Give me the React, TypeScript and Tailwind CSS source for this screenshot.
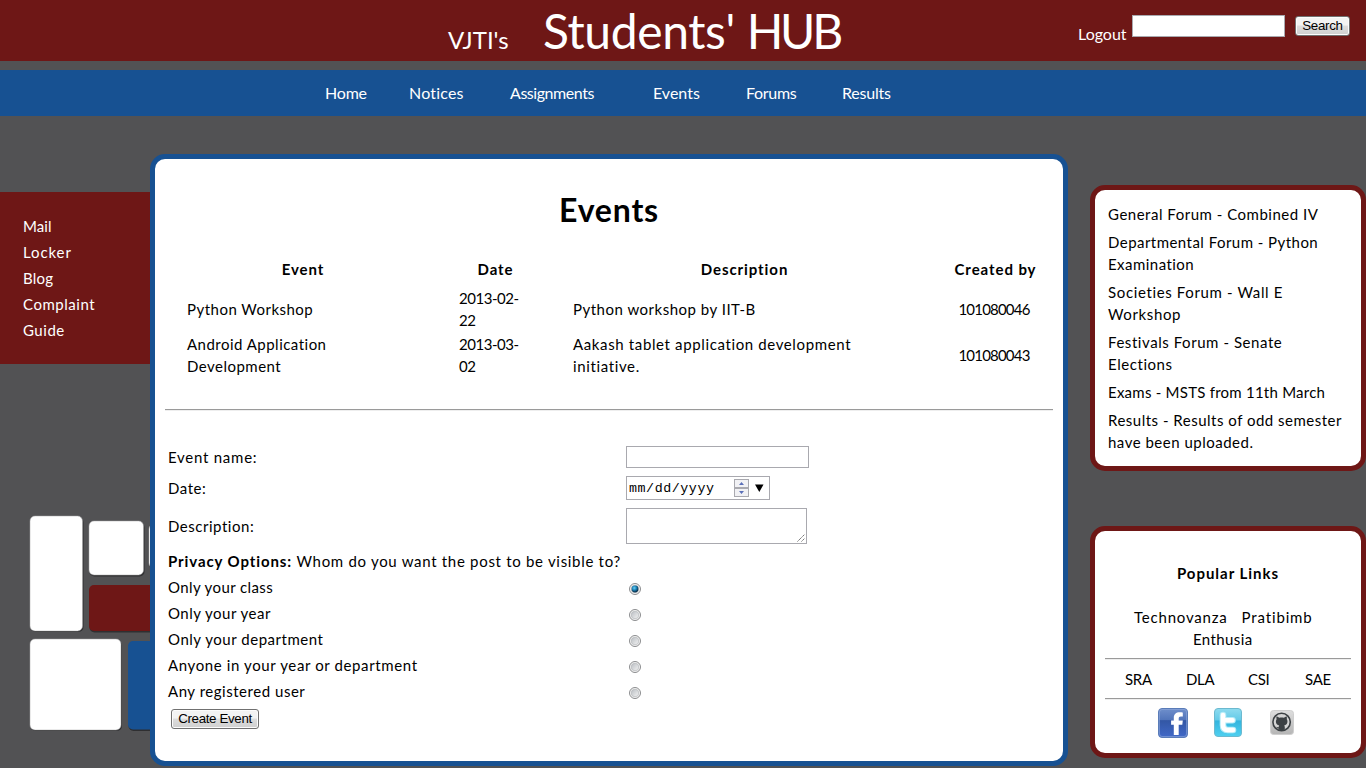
const events = [
  { name: ["Python Workshop"], date: ["2013-02-", "22"], description: ["Python workshop by IIT-B"], by: "101080046", spacing: "tracking-[0.5px]" },
  {
    name: ["Android Application", "Development"],
    date: ["2013-03-", "02"],
    description: ["Aakash tablet application development", "initiative."],
    by: "101080043",
    spacing: "tracking-[0.63px]",
  },
];

const forum = [
  { lines: ["General Forum - Combined IV"], spacing: "tracking-[0.51px]" },
  { lines: ["Departmental Forum - Python", "Examination"], spacing: "tracking-[0.46px]" },
  { lines: ["Societies Forum - Wall E", "Workshop"], spacing: "tracking-[0.64px]" },
  { lines: ["Festivals Forum - Senate", "Elections"], spacing: "tracking-[0.56px]" },
  { lines: ["Exams - MSTS from 11th March"], spacing: "tracking-[0.24px]" },
  { lines: ["Results - Results of odd semester", "have been uploaded."], spacing: "tracking-[0.5px]" },
];

const audiences = [
  { label: "Only your class", spacing: "tracking-[0.4px]" },
  { label: "Only your year", spacing: "tracking-[0.5px]" },
  { label: "Only your department", spacing: "tracking-[0.53px]" },
  { label: "Anyone in your year or department", spacing: "tracking-[0.62px]" },
  { label: "Any registered user", spacing: "tracking-[0.53px]" },
];

function Lines({ lines }: { lines: string[] }) {
  return (
    <>
      {lines.map((line) => (
        <span key={line} className="block whitespace-nowrap">{line}</span>
      ))}
    </>
  );
}

function Rule() {
  return <hr className="h-[2px] border-0 border-t border-[#9a9a9a] bg-[#eeeeee]" />;
}

function GreyButton({ children, className }: { children: string; className: string }) {
  return (
    <button
      className={`${className} h-5 shrink-0 rounded-[3px] border border-[#707070] bg-linear-to-b from-[#f3f3f3] from-45% via-[#dddddd] via-50% to-[#cfcfcf] text-center font-['Liberation_Sans',sans-serif] text-[13.33px] leading-[18px] whitespace-nowrap text-black shadow-[inset_0_0_0_1px_#fcfcfc]`}
    >
      {children}
    </button>
  );
}

function Radio({ checked }: { checked: boolean }) {
  return (
    <svg role="radio" aria-checked={checked} width="12" height="12" viewBox="0 0 12 12">
      <defs>
        <linearGradient id="dish" x1="0" y1="0" x2="1" y2="1">
          <stop offset="0" stopColor="#b9bdc2" />
          <stop offset="1" stopColor="#f4f4f4" />
        </linearGradient>
        <radialGradient id="dot" cx="0.4" cy="0.35" r="0.6">
          <stop offset="0" stopColor="#6fd0f5" />
          <stop offset="0.5" stopColor="#1c86bb" />
          <stop offset="1" stopColor="#0b3350" />
        </radialGradient>
      </defs>
      <circle cx="6" cy="6" r="5.5" fill="#f6f6f6" stroke="#8b8c8e" />
      <circle cx="6" cy="6" r="3.8" fill="url(#dish)" stroke="#b4b7ba" strokeWidth="0.7" />
      {checked && <circle cx="6" cy="6" r="3.4" fill="url(#dot)" />}
    </svg>
  );
}

function Tiles() {
  return (
    <svg width="150" height="220" viewBox="0 0 150 220" className="mt-[150px] block">
      <g fill="#2f2f31">
        <rect x="30.5" y="3.5" width="53" height="114.5" rx="5" />
        <rect x="89.5" y="8.5" width="55" height="54" rx="5" />
        <rect x="89.5" y="72.5" width="90" height="46" rx="5" />
        <rect x="30.5" y="126.5" width="91.5" height="90.5" rx="5" />
        <rect x="128.5" y="128.5" width="60" height="88.5" rx="5" />
      </g>
      <g fill="#ffffff" stroke="#a5a5a7" strokeWidth="0.5">
        <rect x="30" y="2" width="52.5" height="115" rx="5" />
        <rect x="89" y="7" width="54.5" height="54" rx="5" />
        <rect x="149" y="10" width="50" height="44" rx="5" />
        <rect x="30" y="125" width="91" height="91" rx="5" />
      </g>
      <rect x="89" y="71" width="90" height="46" rx="5" fill="#6e1716" />
      <rect x="128" y="127" width="60" height="88.5" rx="5" fill="#175192" />
    </svg>
  );
}

function Facebook() {
  return (
    <svg width="30" height="30" viewBox="0 0 30 30">
      <defs>
        <linearGradient id="fb" x1="0" y1="0" x2="0" y2="1">
          <stop offset="0" stopColor="#6f8fcb" />
          <stop offset="0.38" stopColor="#5275bb" />
          <stop offset="0.42" stopColor="#3357a5" />
          <stop offset="1" stopColor="#4169c8" />
        </linearGradient>
      </defs>
      <rect x="0.5" y="0.5" width="29" height="29" rx="3.5" fill="url(#fb)" stroke="#5a7cb8" />
      <rect x="1.5" y="1.5" width="27" height="27" rx="2.5" fill="none" stroke="#8da8dc" strokeOpacity="0.6" />
      <path d="M15.8 27V16.7h-2.7v-4.2h2.7V10c0-3.9 2.2-5.7 5.8-5.7 1.3 0 2.6.1 3.2.3v4h-1.9c-1.7 0-2.2.7-2.2 2v1.9h4.1l-.5 4.2h-3.6V27z" fill="#fff" />
    </svg>
  );
}

function Twitter() {
  return (
    <svg width="28" height="29" viewBox="0 0 28 29">
      <defs>
        <linearGradient id="tw" x1="0" y1="0" x2="0" y2="1">
          <stop offset="0" stopColor="#8edcf0" />
          <stop offset="0.4" stopColor="#65cbe8" />
          <stop offset="0.45" stopColor="#35b5de" />
          <stop offset="1" stopColor="#4fd0f0" />
        </linearGradient>
      </defs>
      <rect x="0.5" y="0.5" width="27" height="28" rx="3.5" fill="url(#tw)" stroke="#6cb9cf" />
      <g fill="none" strokeLinecap="round" strokeLinejoin="round">
        <path d="M9 7v10c0 3.400 1.600 5 4.800 5h5.200M9 12.200h9.500" stroke="#b5ecf8" strokeWidth="6.6" />
        <path d="M9 7v10c0 3.400 1.600 5 4.800 5h5.200M9 12.200h9.500" stroke="#fff" strokeWidth="4.6" />
      </g>
    </svg>
  );
}

function Github() {
  return (
    <svg width="24" height="25" viewBox="0 0 24 25">
      <defs>
        <linearGradient id="gh" x1="0" y1="0" x2="0" y2="1">
          <stop offset="0" stopColor="#dedede" />
          <stop offset="1" stopColor="#b5b5b5" />
        </linearGradient>
      </defs>
      <rect x="0.5" y="0.5" width="23" height="24" rx="3" fill="url(#gh)" stroke="#cfcfcf" />
      <circle cx="11.6" cy="12" r="8.7" fill="#d4d4d4" stroke="#3c4144" strokeWidth="1.6" />
      <path
        d="M6.6 6.2l2.8 1.5c1.4-.3 3-.3 4.4 0l2.8-1.5c.4 1 .4 2.1.2 3 1.3 1.9.9 5.4-2.6 6.2.5.6.6 1.2.6 2v2.2c-1.9.9-4.3.9-6.4 0v-1.3c-1.3.1-1.9-.6-2.4-1.5 1.1.2 1.500.7 2.600.5 0-.8.2-1.3.6-1.900-3.500-.8-3.900-4.300-2.600-6.200-.2-.9-.4-2 0-3z"
        fill="#3c4144"
      />
    </svg>
  );
}

export default function App() {
  return (
    <div className="flex h-[768px] w-[1366px] flex-col overflow-hidden bg-[#525254] font-['Lato','Open_Sans',sans-serif] text-[15px] leading-[22px] tracking-[0.53px] text-black">
      <header className="flex h-[61px] shrink-0 bg-[#6e1716] text-white">
        <div className="flex w-[1078px] items-baseline pl-[448px] leading-[61px]">
          <span className="w-[95px] text-[24px] tracking-normal">VJTI's</span>
          <span className="text-[48px] tracking-[-0.4px] whitespace-nowrap">
            Students' <span className="tracking-[-3.2px]">HUB</span>
          </span>
        </div>
        <span className="mt-[23px] w-[54px] text-[16px] tracking-normal">Logout</span>
        <input aria-label="Search" className="mt-[15px] h-[22px] w-[153px] border border-[#a9a9af] bg-white px-1" />
        <GreyButton className="mt-4 ml-[10px] w-[55px] tracking-[-0.3px]">Search</GreyButton>
      </header>

      <nav className="mt-[9px] flex h-[46px] shrink-0 items-center bg-[#175192] pl-[325px] text-[16px] tracking-normal text-white">
        <a className="w-[84px] tracking-[-0.2px]">Home</a>
        <a className="w-[101px] tracking-[0.2px]">Notices</a>
        <a className="w-[143px] tracking-[-0.45px]">Assignments</a>
        <a className="w-[93px]">Events</a>
        <a className="w-[96px] tracking-[-0.3px]">Forums</a>
        <a className="tracking-[-0.2px]">Results</a>
      </nav>

      <div className="flex min-h-0 flex-1">
        <aside className="w-[150px] shrink-0 pt-[76px]">
          <ul className="h-[172px] bg-[#6e1716] pt-[21px] pl-[23px] leading-[26px] text-white">
            <li className="tracking-[0.1px]">Mail</li>
            <li className="tracking-[0.9px]">Locker</li>
            <li className="tracking-[0.2px]">Blog</li>
            <li>Complaint</li>
            <li>Guide</li>
          </ul>
          <Tiles />
        </aside>

        <main className="mt-[38px] h-[612px] w-[918px] shrink-0 rounded-[15px] border-[5px] border-[#175192] bg-white px-[10px]">
          <h1 className="mt-[29px] text-center text-[32px] leading-[44px] font-bold tracking-[0.8px]">Events</h1>
          <section className="mt-[26px] ml-[22px]">
            <div className="grid h-[29px] grid-cols-[232px_71px_344px_84px] gap-x-[41px] text-center font-bold tracking-[0.92px]">
              <span>Event</span>
              <span>Date</span>
              <span className="pl-px">Description</span>
              <span className="-ml-[7px] whitespace-nowrap">Created by</span>
            </div>
            {events.map((e) => (
              <div key={e.by} className="mb-[2px] grid h-11 grid-cols-[231px_73px_344px_84px] items-center gap-x-[41px]">
                <div className="tracking-[0.48px]"><Lines lines={e.name} /></div>
                <div className="tracking-[-0.45px]"><Lines lines={e.date} /></div>
                <div className={e.spacing}><Lines lines={e.description} /></div>
                <div className="-ml-[12px] text-center tracking-[-0.8px]">{e.by}</div>
              </div>
            ))}
          </section>
          <div className="mt-8"><Rule /></div>

          <form className="mt-[35px] ml-[3px]">
            <label className="flex h-[22px]">
              <span className="w-[458px] tracking-[0.75px]">Event name:</span>
              <input className="h-[22px] w-[183px] border border-[#a9a9af] px-1" />
            </label>
            <div className="mt-2 flex h-6 items-center">
              <span className="w-[458px]">Date:</span>
              <div className="flex h-6 w-36 items-center border border-[#a9a9af] pl-[2px] font-['Liberation_Mono',monospace] text-[13.33px] tracking-normal">
                <span className="w-[105px] pt-px tracking-[0.55px]">mm/dd/yyyy</span>
                <svg width="30" height="18" viewBox="0 0 30 18" className="shrink-0">
                  <rect x="0.5" y="0.5" width="14" height="8" fill="#f1f1f4" stroke="#a9a9af" />
                  <rect x="0.5" y="9.5" width="14" height="8" fill="#f1f1f4" stroke="#a9a9af" />
                  <path d="M5 6l2.5-3 2.5 3zM5 12l2.5 3 2.5-3z" fill="#5a6fb8" />
                  <path d="M21 5.5h8.5l-4.2 7.5z" fill="#000" />
                </svg>
              </div>
            </div>
            <div className="mt-2 flex h-9 items-center">
              <span className="w-[458px]">Description:</span>
              <div role="textbox" className="flex h-9 w-[181px] items-end justify-end border border-[#a9a9af] p-px">
                <svg width="8" height="8" viewBox="0 0 8 8" stroke="#555" strokeWidth="0.9">
                  <path d="M0.5 7.5l7-7M4.5 7.5l3-3" strokeDasharray="1.4 0.5" />
                </svg>
              </div>
            </div>
            <p className="mt-[6px] h-[25px] whitespace-nowrap">
              <b className="tracking-[0.9px]">Privacy Options:</b> <span className="tracking-[0.7px]">Whom do you want the post to be visible to?</span>
            </p>
            {audiences.map(({ label, spacing }, i) => (
              <label key={label} className="flex h-[26px] items-center">
                <span className={`w-[461px] pb-[3px] ${spacing}`}>{label}</span>
                <span className="pt-[2px]"><Radio checked={i === 0} /></span>
              </label>
            ))}
            <GreyButton className="mt-1 ml-[3px] block w-[88px] px-0 tracking-[-0.35px]">Create Event</GreyButton>
          </form>
        </main>

        <aside className="ml-[22px] w-[276px] shrink-0 pt-[69px]">
          <ul className="flex h-[286px] flex-col gap-[6px] rounded-[15px] border-[5px] border-[#6e1716] bg-white pt-[13px] pl-[13px]">
            {forum.map(({ lines, spacing }) => (
              <li key={lines[0]} className={spacing}><Lines lines={lines} /></li>
            ))}
          </ul>
          <section className="mt-[55px] h-[232px] rounded-[15px] border-[5px] border-[#6e1716] bg-white px-[10px] pt-[31px]">
            <h4 className="text-center font-bold tracking-[0.98px]">Popular Links</h4>
            <div className="mt-[22px] flex gap-[14px] pl-[29px]">
              <a className="tracking-[0.8px]">Technovanza</a>
              <a className="tracking-[0.85px]">Pratibimb</a>
            </div>
            <div className="mb-2 pl-[88px] tracking-[0.4px]">Enthusia</div>
            <Rule />
            <div className="my-[9px] flex h-[20px] items-center pl-5 tracking-[-0.3px]">
              <a className="w-[61px]">SRA</a>
              <a className="w-[62px]">DLA</a>
              <a className="w-[57px]">CSI</a>
              <a>SAE</a>
            </div>
            <Rule />
            <div className="mt-2 flex pl-[53px]">
              <Facebook />
              <span className="ml-[26px]"><Twitter /></span>
              <span className="mt-[2px] ml-7"><Github /></span>
            </div>
          </section>
        </aside>
      </div>
    </div>
  );
}
